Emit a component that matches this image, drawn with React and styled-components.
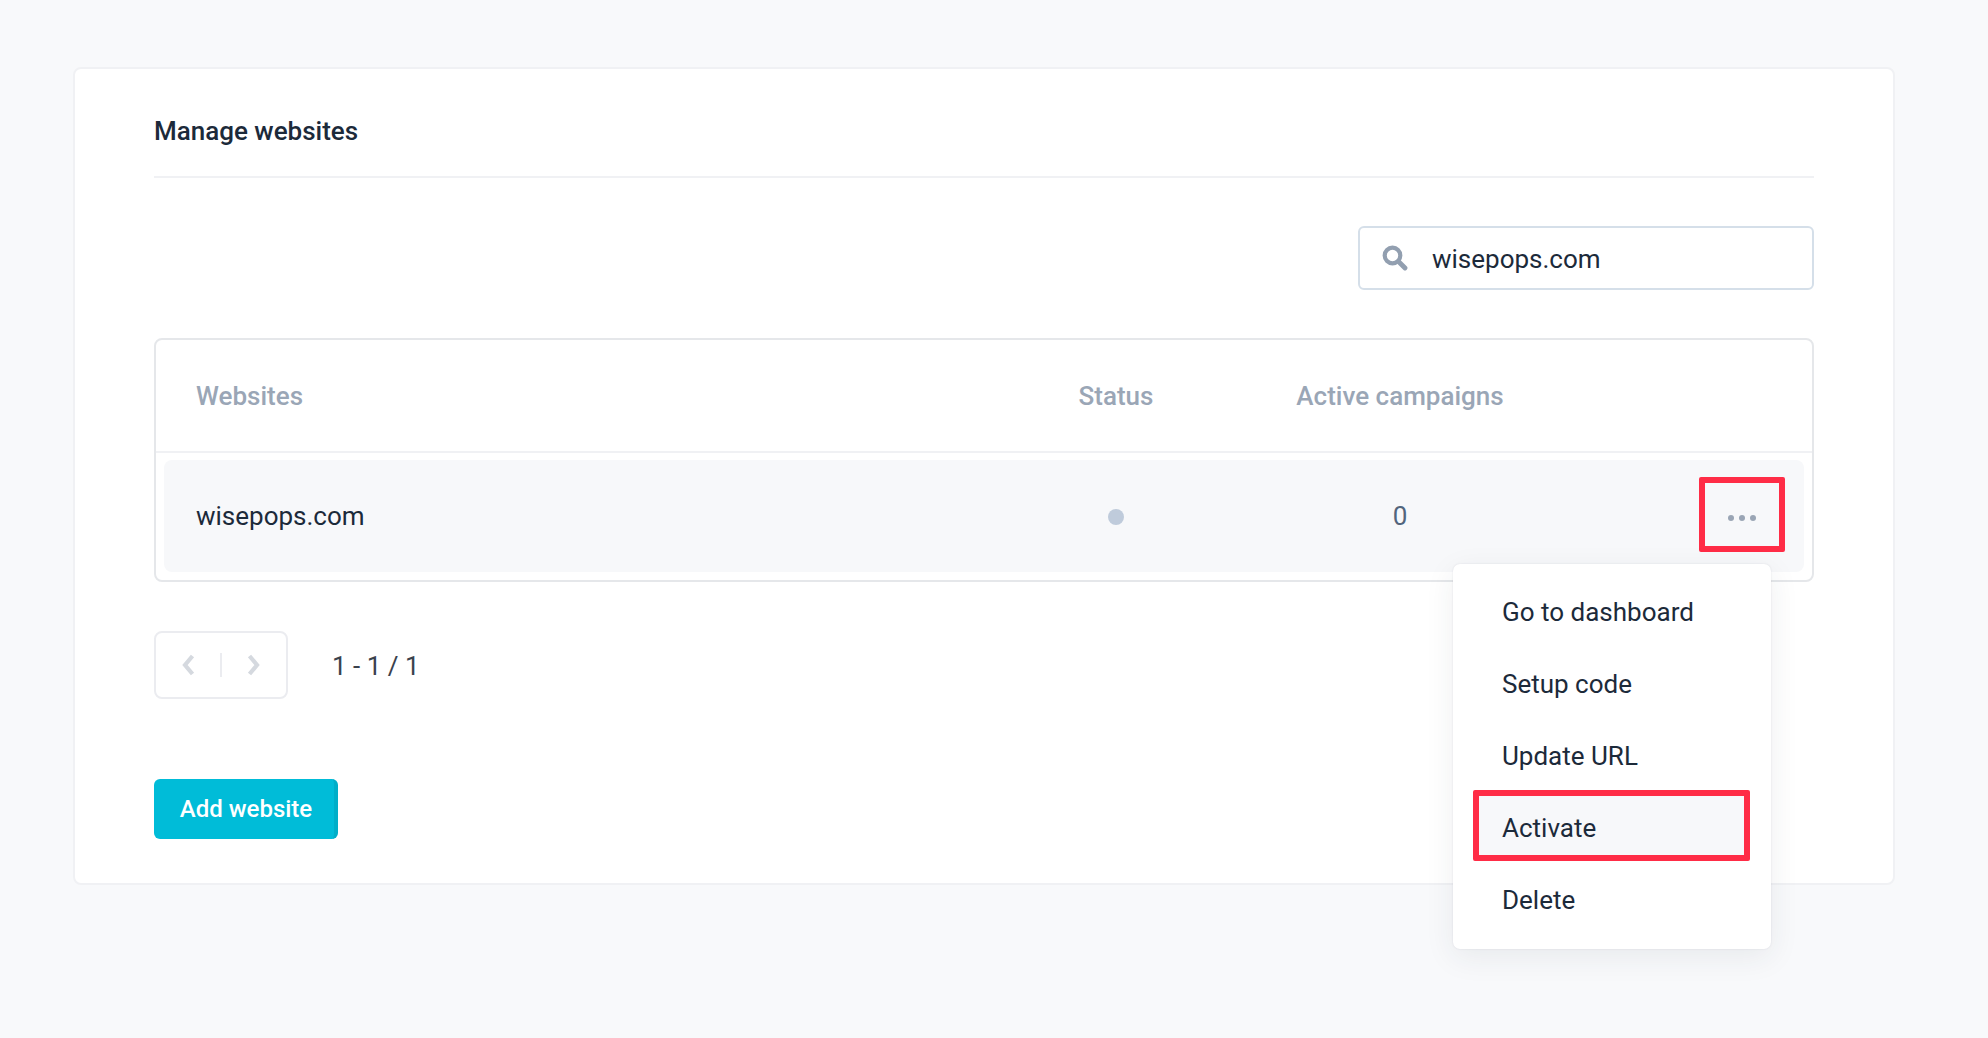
import React from "react";
import styled, { createGlobalStyle } from "styled-components";

const GlobalStyle = createGlobalStyle`
  html, body {
    margin: 0;
    padding: 0;
    background: #f8f9fb;
    font-family: Roboto, "Liberation Sans", sans-serif;
    color: #1c2a3a;
  }
  * {
    box-sizing: border-box;
  }
`;

const Page = styled.div`
  height: 1038px;
  padding: 67px 93px 0 73px;
`;

const Card = styled.section`
  height: 818px;
  padding: 0 79px;
  background: #fff;
  border: 2px solid #f0f1f4;
  border-radius: 8px;
`;

const Title = styled.h1`
  height: 109px;
  margin: 0;
  display: flex;
  align-items: center;
  padding-top: 16px;
  font-size: 26px;
  font-weight: 500;
  color: #1c2a3a;
  border-bottom: 2px solid #f0f1f4;
`;

const SearchRow = styled.div`
  display: flex;
  justify-content: flex-end;
  padding: 48px 0;
`;

const SearchBox = styled.label`
  width: 456px;
  height: 64px;
  display: flex;
  align-items: center;
  gap: 24px;
  padding: 0 22px;
  border: 2px solid #d5dfe9;
  border-radius: 6px;
`;

const SearchInput = styled.input`
  flex: 1;
  min-width: 0;
  padding: 2px 0 0;
  border: 0;
  outline: 0;
  background: none;
  font: 400 26px Roboto, sans-serif;
  color: #1c2a3a;
`;

const Table = styled.div`
  position: relative;
  height: 244px;
  border: 2px solid #e5e7ea;
  border-radius: 8px;
`;

const HeadRow = styled.div`
  display: grid;
  grid-template-columns: 844px 152px 416px 1fr;
  align-items: center;
  height: 113px;
  padding-left: 40px;
  border-bottom: 2px solid #f0f1f4;
`;

const HeadCell = styled.div`
  font-size: 26px;
  font-weight: 500;
  color: #9aa6b6;
  text-align: ${(props) => props.$align || "left"};
`;

const Row = styled.div`
  display: grid;
  grid-template-columns: 844px 152px 416px 1fr;
  align-items: center;
  height: 112px;
  margin: 7px 8px 0;
  padding: 0 19px 0 32px;
  background: #f7f8fa;
  border-radius: 8px;
`;

const SiteName = styled.div`
  font-size: 26px;
  color: #1c2a3a;
`;

const StatusCell = styled.div`
  display: flex;
  justify-content: center;
  padding-top: 1px;
`;

const StatusDot = styled.span`
  width: 16px;
  height: 16px;
  border-radius: 50%;
  background: #bfcbdb;
`;

const CountCell = styled.div`
  font-size: 26px;
  text-align: center;
  color: #52657d;
`;

const ActionCell = styled.div`
  display: flex;
  justify-content: flex-end;
  margin-bottom: 4px;
`;

const MoreButton = styled.button`
  width: 86px;
  height: 75px;
  display: flex;
  align-items: center;
  justify-content: center;
  padding: 7px 0 0;
  background: none;
  border: 6px solid #ff2c46;
  border-radius: 2px;
`;

const Menu = styled.ul`
  position: absolute;
  top: 224px;
  right: 41px;
  width: 318px;
  height: 385px;
  margin: 0;
  padding: 12px 21px 0 20px;
  list-style: none;
  background: #fff;
  border-radius: 7px;
  box-shadow: 0 0 2px rgba(40, 50, 70, 0.12), 0 8px 30px rgba(40, 50, 70, 0.08);
  z-index: 2;
`;

const MenuItem = styled.li`
  height: 72px;
  display: flex;
  align-items: center;
  padding-left: 29px;
  font-size: 26px;
  color: #1c2a3a;

  ${(props) =>
    props.$marked &&
    `
    height: 71px;
    margin: -2px 0 3px;
    padding: 4px 0 0 23px;
    background: #f7f8fa;
    border: 6px solid #ff2c46;
    border-radius: 2px;
  `}
`;

const PagerRow = styled.div`
  display: flex;
  align-items: center;
  gap: 44px;
  margin-top: 49px;
`;

const Pager = styled.div`
  width: 134px;
  height: 68px;
  display: flex;
  align-items: center;
  border: 2px solid #ebecf0;
  border-radius: 8px;
`;

const PagerButton = styled.button`
  flex: 1;
  height: 24px;
  display: flex;
  align-items: center;
  justify-content: center;
  padding: 0;
  background: none;
  border: 0;
`;

const PagerDivider = styled.span`
  width: 2px;
  height: 24px;
  background: #ebecf0;
`;

const PagerText = styled.div`
  padding-top: 2px;
  font-size: 26px;
  color: #3a424d;
`;

const AddButton = styled.button`
  display: block;
  width: 184px;
  height: 60px;
  margin-top: 80px;
  padding: 0 0 0 4px;
  font: 500 24px Roboto, sans-serif;
  color: #fff;
  background: #00bcd8;
  border: 0;
  border-right: 4px solid #00aec8;
  border-radius: 6px;
`;

const SearchIcon = () => (
  <svg width="26" height="26" viewBox="0 0 26 26" fill="none">
    <circle cx="10.5" cy="10.5" r="7.8" stroke="#929fb0" strokeWidth="4.2" />
    <path d="M16.5 16.5 L23 23" stroke="#929fb0" strokeWidth="4.8" strokeLinecap="round" />
  </svg>
);

const DotsIcon = () => (
  <svg width="28" height="8" viewBox="0 0 28 8">
    <circle cx="3" cy="4" r="3" fill="#9aa5b5" />
    <circle cx="14" cy="4" r="3" fill="#9aa5b5" />
    <circle cx="25" cy="4" r="3" fill="#9aa5b5" />
  </svg>
);

const Chevron = ({ flip }) => (
  <svg width="14" height="22" viewBox="0 0 14 22" fill="none">
    <path
      d={flip ? "M2.5 2 L10 11 L2.5 20" : "M11.5 2 L4 11 L11.5 20"}
      stroke="#d5d9df"
      strokeWidth="4.2"
    />
  </svg>
);

const menuItems = ["Go to dashboard", "Setup code", "Update URL", "Activate", "Delete"];

const App = () => {
  return (
    <Page>
      <GlobalStyle />
      <Card>
        <Title>Manage websites</Title>
        <SearchRow>
          <SearchBox>
            <SearchIcon />
            <SearchInput defaultValue="wisepops.com" />
          </SearchBox>
        </SearchRow>
        <Table>
          <HeadRow>
            <HeadCell>Websites</HeadCell>
            <HeadCell $align="center">Status</HeadCell>
            <HeadCell $align="center">Active campaigns</HeadCell>
          </HeadRow>
          <Row>
            <SiteName>wisepops.com</SiteName>
            <StatusCell>
              <StatusDot />
            </StatusCell>
            <CountCell>0</CountCell>
            <ActionCell>
              <MoreButton>
                <DotsIcon />
              </MoreButton>
            </ActionCell>
          </Row>
          <Menu>
            {menuItems.map((item) => (
              <MenuItem key={item} $marked={item === "Activate"}>
                {item}
              </MenuItem>
            ))}
          </Menu>
        </Table>
        <PagerRow>
          <Pager>
            <PagerButton>
              <Chevron />
            </PagerButton>
            <PagerDivider />
            <PagerButton>
              <Chevron flip />
            </PagerButton>
          </Pager>
          <PagerText>1 - 1 / 1</PagerText>
        </PagerRow>
        <AddButton>Add website</AddButton>
      </Card>
    </Page>
  );
};

export default App;
